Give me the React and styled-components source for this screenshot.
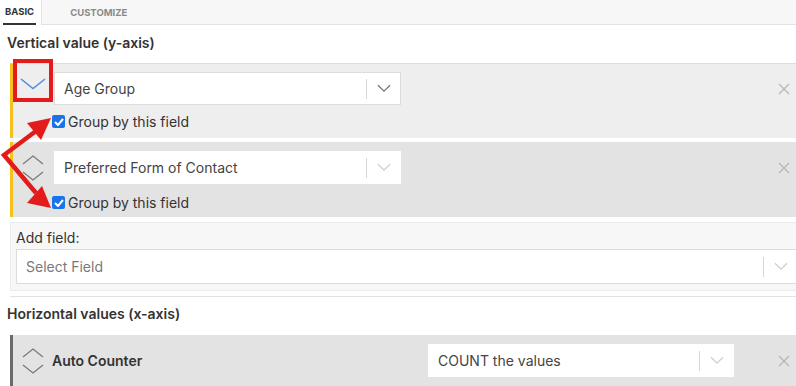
import React from 'react';
import styled, { createGlobalStyle } from 'styled-components';

const GlobalStyle = createGlobalStyle`
  html, body { margin: 0; padding: 0; background: #fff; }
  body { font-family: Inter, "Noto Sans", "Liberation Sans", sans-serif; color: #333; }
  * { box-sizing: border-box; }
`

const Page = styled.div`
  position: relative;
  width: 796px;
  height: 386px;
  overflow: hidden;
`

const Tabs = styled.div`
  display: flex;
  height: 25px;
`

const Tab = styled.div`
  display: flex;
  align-items: center;
  height: 25px;
  font-size: 9.5px;
  font-weight: 700;
  color: ${p => (p.active ? '#333' : '#8a8a8a')};
  padding: 0 ${p => (p.active ? '2px' : '28px')};
  margin-left: ${p => (p.active ? '3px' : '0')};
  border-bottom: ${p => (p.active ? '2px solid #333' : '1px solid #e3e3e3')};
  background: ${p => (p.active ? '#fff' : '#f7f7f7')};
`

const TabFill = styled.div`
  flex: 1;
  background: #f7f7f7;
  border-bottom: 1px solid #e3e3e3;
`

const TabGroup = styled.div`
  display: flex;
  flex: 1;
  border-left: 1px solid #e3e3e3;
  margin-left: 5px;
`

const SectionTitle = styled.div`
  font-size: 14px;
  font-weight: 600;
  color: #333;
  padding: ${p => p.pad || '9px 7px 0'};
  height: ${p => p.h || '38px'};
`

const FieldList = styled.div`
  display: flex;
  flex-direction: column;
  gap: 4px;
  margin-left: 10px;
`

const FieldBlock = styled.div`
  background: ${p => p.bg};
  border-left: 3px solid ${p => p.accent};
  border-top: ${p => (p.top ? '1px solid #dedede' : 'none')};
  height: ${p => p.h || '75px'};
  padding-top: ${p => p.pt || '8px'};
  display: flex;
  flex-direction: column;
`

const Row = styled.div`
  display: flex;
  align-items: center;
`

const Handle = styled.div`
  width: 40px;
  height: ${p => (p.highlighted ? '43px' : '33px')};
  align-self: flex-start;
  margin-top: ${p => (p.highlighted ? '-13px' : '0')};
  margin-bottom: ${p => (p.highlighted ? '3px' : '0')};
  border: ${p => (p.highlighted ? '4px solid #e41b1b' : 'none')};
  display: flex;
  align-items: ${p => (p.highlighted ? 'flex-end' : 'center')};
  padding-bottom: ${p => (p.highlighted ? '8px' : '0')};
  justify-content: center;
  flex-shrink: 0;
`

const Select = styled.div`
  display: flex;
  align-items: center;
  width: ${p => p.w};
  height: ${p => p.h || '33px'};
  margin-left: ${p => p.ml || '1px'};
  background: #fff;
  border: 1px solid ${p => (p.bordered ? '#dcdcdc' : '#fff')};
  font-size: 14px;
  color: ${p => (p.placeholder ? '#7a7a7a' : '#444')};
  padding-left: 9px;
`

const SelectText = styled.span`
  flex: 1;
`

const Indicator = styled.div`
  width: 34px;
  height: 20px;
  border-left: 1px solid #d6d6d6;
  display: flex;
  align-items: center;
  justify-content: center;
`

const Close = styled.div`
  margin-left: auto;
  margin-right: 5px;
  width: 14px;
  height: 14px;
  display: flex;
  align-items: center;
  justify-content: center;
`

const CheckRow = styled.label`
  display: flex;
  align-items: center;
  margin-left: ${p => p.ml || '39px'};
  margin-top: ${p => p.mt || '8px'};
  font-size: 14px;
  color: #333;
  gap: 3px;
`

const Check = styled.span`
  width: 13px;
  height: 13px;
  border-radius: 2px;
  background: #1a73e8;
  display: flex;
  align-items: center;
  justify-content: center;
`

const AddBlock = styled.div`
  margin: 5px 0 0 10px;
  height: 69px;
  background: #f7f7f7;
  border: 1px solid #ececec;
  border-right: none;
  padding: 6px 0 0 5px;
`

const AddLabel = styled.div`
  font-size: 14px;
  color: #333;
  margin-bottom: 3px;
`

const Divider = styled.div`
  margin: 5px 0 0 10px;
  border-top: 1px solid #e2e2e2;
`

const CounterName = styled.div`
  font-size: 14px;
  font-weight: 600;
  color: #333;
  width: 375px;
  margin-left: -1px;
`

const Overlay = styled.svg`
  position: absolute;
  left: 0;
  top: 0;
  pointer-events: none;
`

const ChevronDown = ({ color = '#888', size = 14, w = 1.3 }) => (
  <svg width={size} height={size * 0.6} viewBox="0 0 14 8">
    <path d="M1 1 L7 7 L13 1" fill="none" stroke={color} strokeWidth={w} />
  </svg>
)

const BigChevron = () => (
  <svg width="26" height="12" viewBox="0 0 26 12">
    <path d="M1 1 L13 10.5 L25 1" fill="none" stroke="#4a8ee0" strokeWidth="1.5" />
  </svg>
)

const UpDown = () => (
  <svg width="22" height="26" viewBox="0 0 22 26">
    <path d="M1 9 L11 1 L21 9" fill="none" stroke="#777" strokeWidth="1.2" />
    <path d="M1 17 L11 25 L21 17" fill="none" stroke="#777" strokeWidth="1.2" />
  </svg>
)

const XIcon = () => (
  <svg width="12" height="12" viewBox="0 0 12 12">
    <path d="M1 1 L11 11 M11 1 L1 11" stroke="#b5b5b5" strokeWidth="1.2" />
  </svg>
)

const Tick = () => (
  <svg width="10" height="8" viewBox="0 0 10 8">
    <path d="M1 4 L4 7 L9 1" fill="none" stroke="#fff" strokeWidth="2" />
  </svg>
)

const SelectBox = ({ text, w, h, ml, faint, placeholder, bordered }) => (
  <Select w={w} h={h} ml={ml} placeholder={placeholder} bordered={bordered}>
    <SelectText>{text}</SelectText>
    <Indicator>
      <ChevronDown color={faint ? '#cfcfcf' : '#777'} />
    </Indicator>
  </Select>
)

const App = () => (
  <Page>
    <GlobalStyle />
    <Tabs>
      <Tab active>BASIC</Tab>
      <TabGroup>
        <Tab>CUSTOMIZE</Tab>
        <TabFill />
      </TabGroup>
    </Tabs>

    <SectionTitle>Vertical value (y-axis)</SectionTitle>

    <FieldList>
      <FieldBlock bg="#eeeeee" accent="#f5c21b" top>
        <Row>
          <Handle highlighted>
            <BigChevron />
          </Handle>
          <SelectBox text="Age Group" w="347px" bordered />
          <Close><XIcon /></Close>
        </Row>
        <CheckRow>
          <Check><Tick /></Check>
          Group by this field
        </CheckRow>
      </FieldBlock>

      <FieldBlock bg="#e3e3e3" accent="#f5c21b" pt="9px">
        <Row>
          <Handle><UpDown /></Handle>
          <SelectBox text="Preferred Form of Contact" w="347px" faint />
          <Close><XIcon /></Close>
        </Row>
        <CheckRow mt="10px">
          <Check><Tick /></Check>
          Group by this field
        </CheckRow>
      </FieldBlock>
    </FieldList>

    <AddBlock>
      <AddLabel>Add field:</AddLabel>
      <SelectBox text="Select Field" w="782px" h="35px" ml="0" placeholder faint bordered />
    </AddBlock>

    <Divider />
    <SectionTitle pad="8px 7px 0" h="38px">Horizontal values (x-axis)</SectionTitle>

    <FieldList>
      <FieldBlock bg="#e3e3e3" accent="#6b6b6b" h="60px" pt="9px">
        <Row>
          <Handle><UpDown /></Handle>
          <CounterName>Auto Counter</CounterName>
          <SelectBox text="COUNT the values" w="306px" faint />
          <Close><XIcon /></Close>
        </Row>
      </FieldBlock>
    </FieldList>

    <Overlay width="796" height="386" viewBox="0 0 796 386">
      <path d="M36 131 L4 155 L36 193" stroke="#e41b1b" strokeWidth="4.5" fill="none" />
      <path d="M51 118 L27 123 L41 140 Z" fill="#e41b1b" />
      <path d="M51 208 L27 203 L42 186 Z" fill="#e41b1b" />
    </Overlay>
  </Page>
)

export default App
